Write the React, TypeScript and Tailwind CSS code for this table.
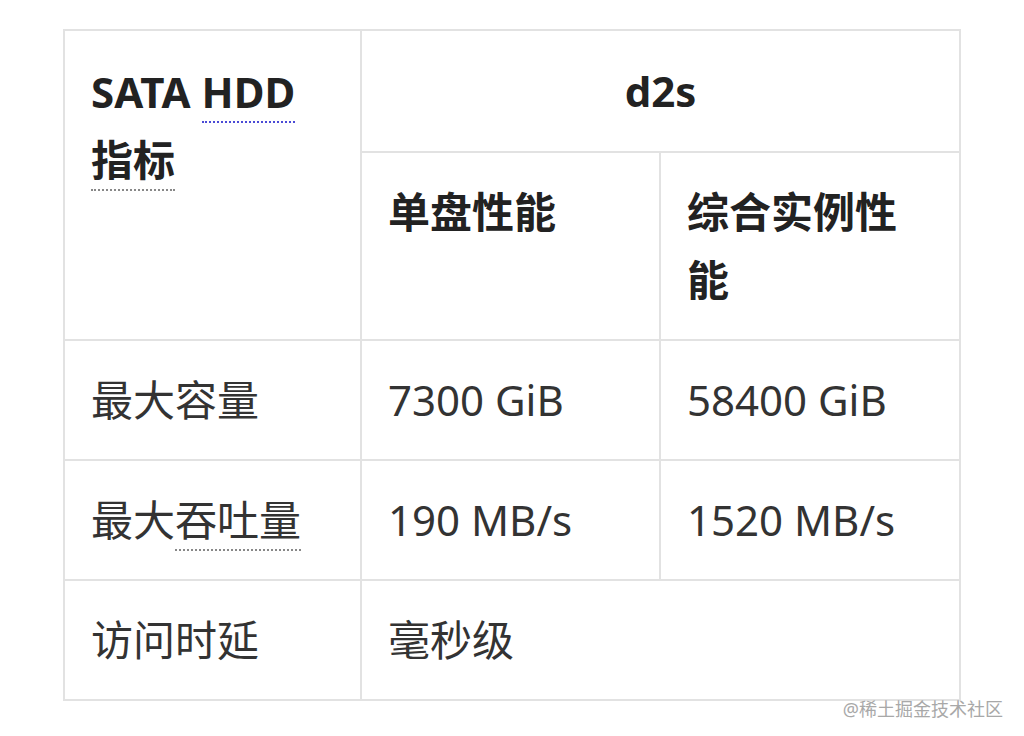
const font = { fontFamily: '"Noto Sans", "Noto Sans CJK SC", sans-serif' }

function Dotted({ children, color }: { children: React.ReactNode; color: string }) {
  return (
    <span className={`border-b-2 border-dotted pb-[1px] ${color}`}>{children}</span>
  )
}

const cell = 'border-2 border-[#e2e2e2] px-[26px] py-[25px] align-top'

export default function App() {
  return (
    <div className="relative h-[736px] w-[1024px] overflow-hidden bg-white pl-[63px] pt-[29px]" style={font}>
      <table className="w-[898px] table-fixed border-collapse text-[42px] leading-[68px] text-[#333]">
        <colgroup>
          <col className="w-[297px]" />
          <col className="w-[299px]" />
          <col className="w-[300px]" />
        </colgroup>
        <thead className="font-bold text-[#222]">
          <tr>
            <th rowSpan={2} className={`${cell} pt-[27px] text-left`}>
              SATA <Dotted color="border-[#4b4bd6]">HDD</Dotted>
              <br />
              <Dotted color="border-[#888]">指标</Dotted>
            </th>
            <th colSpan={2} className={`${cell} py-[26px] text-center`}>
              d2s
            </th>
          </tr>
          <tr>
            <th className={`${cell} text-left`}>单盘性能</th>
            <th className={`${cell} text-left`}>综合实例性能</th>
          </tr>
        </thead>
        <tbody>
          <tr>
            <td className={cell}>最大容量</td>
            <td className={cell}>7300 GiB</td>
            <td className={cell}>58400 GiB</td>
          </tr>
          <tr>
            <td className={cell}>
              最大<Dotted color="border-[#888]">吞吐量</Dotted>
            </td>
            <td className={cell}>190 MB/s</td>
            <td className={cell}>1520 MB/s</td>
          </tr>
          <tr>
            <td className={cell}>访问时延</td>
            <td colSpan={2} className={cell}>
              毫秒级
            </td>
          </tr>
        </tbody>
      </table>
      <div className="absolute right-[21px] bottom-[18px] text-[18px] leading-none text-[#a8a8a8]">
        @稀土掘金技术社区
      </div>
    </div>
  )
}
